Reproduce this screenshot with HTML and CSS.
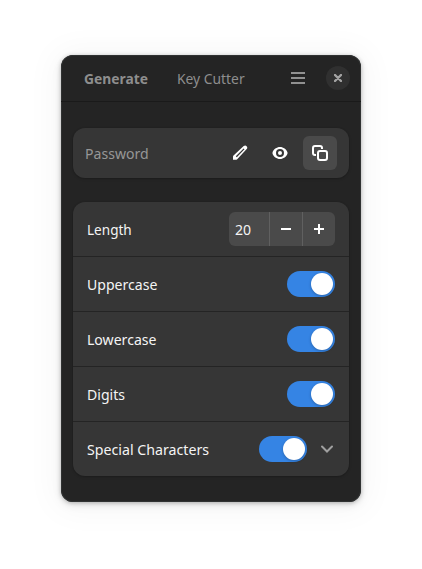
FILE: index.html
```html
<!DOCTYPE html>
<html lang="en">
<head>
<meta charset="utf-8">
<title>Key Cutter</title>
<link rel="stylesheet" href="styles.css">
</head>
<body>
<main class="window">
  <header class="header">
    <span class="tab tab-active"><span class="text">Generate</span></span>
    <span class="tab tab-second"><span class="text">Key Cutter</span></span>
    <svg class="menu" width="14" height="12" viewBox="0 0 14 12"><path d="M0 1h14M0 6h14M0 11h14" stroke="#919191" stroke-width="2"/></svg>
    <button class="close" aria-label="Close"><svg width="8" height="8" viewBox="0 0 8 8"><path d="M1 1l6 6M7 1L1 7" stroke="#a3a3a3" stroke-width="2.4" stroke-linecap="round"/></svg></button>
  </header>
  <section class="card password">
    <span class="placeholder"><span class="text">Password</span></span>
    <button class="tool" aria-label="Edit"><svg width="16" height="16" viewBox="0 0 16 16"><path fill="#fff" fill-rule="evenodd" d="M11.700 1.100q1.600-1.200 2.900.1 1.300 1.400.1 2.900L5.200 14.300l-.8.500H1v-3.400l.5-.8zM3.800 11.200l1 1 7.700-7.900-.9-.9z"/></svg></button>
    <button class="tool" aria-label="Show"><svg width="16" height="16" viewBox="0 0 16 16"><path fill="#fff" fill-rule="evenodd" d="M8 2C4.600 2 1.500 4.300.5 7.500v1C1.500 11.700 4.600 14 8 14s6.500-2.300 7.500-5.500v-1C14.500 4.300 11.400 2 8 2zm0 2a4 4 0 1 1 0 8 4 4 0 0 1 0-8zm0 2a2 2 0 1 0 0 4 2 2 0 0 0 0-4z"/></svg></button>
    <button class="tool copy" aria-label="Copy"><svg width="16" height="16" viewBox="0 0 16 16" fill="none" stroke="#fff" stroke-width="2"><rect x="6" y="6" width="9" height="9" rx="2"/><path d="M4 10H3a2 2 0 0 1-2-2V3a2 2 0 0 1 2-2h5a2 2 0 0 1 2 2v1"/></svg></button>
  </section>
  <section class="card options">
    <div class="row"><span class="label"><span class="text narrow">Length</span></span>
      <div class="spin"><span class="value"><span class="text">20</span></span><button class="step" aria-label="Decrease"><svg width="10" height="10" viewBox="0 0 10 10"><path d="M0 5h10" stroke="#fff" stroke-width="2"/></svg></button><button class="step" aria-label="Increase"><svg width="10" height="10" viewBox="0 0 10 10"><path d="M0 5h10M5 0v10" stroke="#fff" stroke-width="2"/></svg></button></div>
    </div>
    <div class="row"><span class="label"><span class="text">Uppercase</span></span><span class="switch"></span></div>
    <div class="row"><span class="label"><span class="text">Lowercase</span></span><span class="switch"></span></div>
    <div class="row"><span class="label"><span class="text">Digits</span></span><span class="switch"></span></div>
    <div class="row"><span class="label"><span class="text wide">Special Characters</span></span><span class="switch"></span>
      <svg class="chevron" width="16" height="16" viewBox="0 0 16 16"><path d="M3 5.500l5 5 5-5" fill="none" stroke="#a0a0a0" stroke-width="2" stroke-linecap="round"/></svg>
    </div>
  </section>
</main>
</body>
</html>
```
FILE: styles.css
```css
* { box-sizing: border-box; }
body { margin: 0; padding: 55px 61px 67px; background: #fff; font: 14.67px/20px "Noto Sans", sans-serif; color: #f4f4f4; }
.window { width: 300px; height: 447px; border-radius: 12px; background: #242424; box-shadow: inset 0 0 0 1px #303232, 0 1px 4px rgba(0,0,0,.26), 0 3px 10px rgba(0,0,0,.09), 0 2px 32px 8px rgba(0,0,0,.035); }
.header { height: 47px; border-bottom: 1px solid #1a1a1a; display: flex; align-items: center; padding: 0 11px 0 23px; color: #8e8e8e; }
.text { display: block; width: max-content; white-space: nowrap; transform: scaleX(.96); transform-origin: left; }
.text.narrow { transform: scaleX(.925); }
.text.wide { transform: scaleX(.968); }
.tab-active { font-weight: 700; width: 93px; }
.tab-active .text { transform: scaleX(.943); }
.tab-second { width: 114px; }
.tab-second .text { transform: scaleX(.945); }
.menu { flex: none; }
button { border: 0; padding: 0; margin: 0; background: none; display: flex; align-items: center; justify-content: center; flex: none; }
.close { width: 24px; height: 24px; border-radius: 50%; background: #303030; margin-left: auto; }
.card { margin: 0 12px; background: #363636; border-radius: 12px; box-shadow: 0 1px 3px rgba(0,0,0,.2), 0 0 0 1px rgba(0,0,0,.03); }
.password { margin-top: 26px; height: 50px; padding: 0 12px; display: flex; align-items: center; gap: 6px; }
.placeholder { color: #969696; margin-right: auto; }
.tool { width: 34px; height: 34px; border-radius: 6px; }
.copy { background: #4a4a4a; }
.options { margin-top: 24px; height: 274px; }
.row { height: 55px; display: flex; align-items: center; padding: 0 14px; border-bottom: 1px solid #242424; }
.row:last-child { height: 54px; border-bottom: 0; }
.label { margin-right: auto; }
.spin { width: 106px; height: 34px; border-radius: 6px; background: #4a4a4a; display: flex; }
.value { width: 40px; padding: 7px 6px; }
.step { width: 33px; border-left: 1px solid #606060; }
.switch { width: 48px; height: 26px; border-radius: 13px; background: #3584e4; padding: 2px; display: flex; justify-content: flex-end; }
.switch::after { content: ""; width: 22px; height: 22px; border-radius: 50%; background: #fff; box-shadow: 0 1px 3px rgba(0,0,0,.25); }
.chevron { margin-left: 12px; }
```
